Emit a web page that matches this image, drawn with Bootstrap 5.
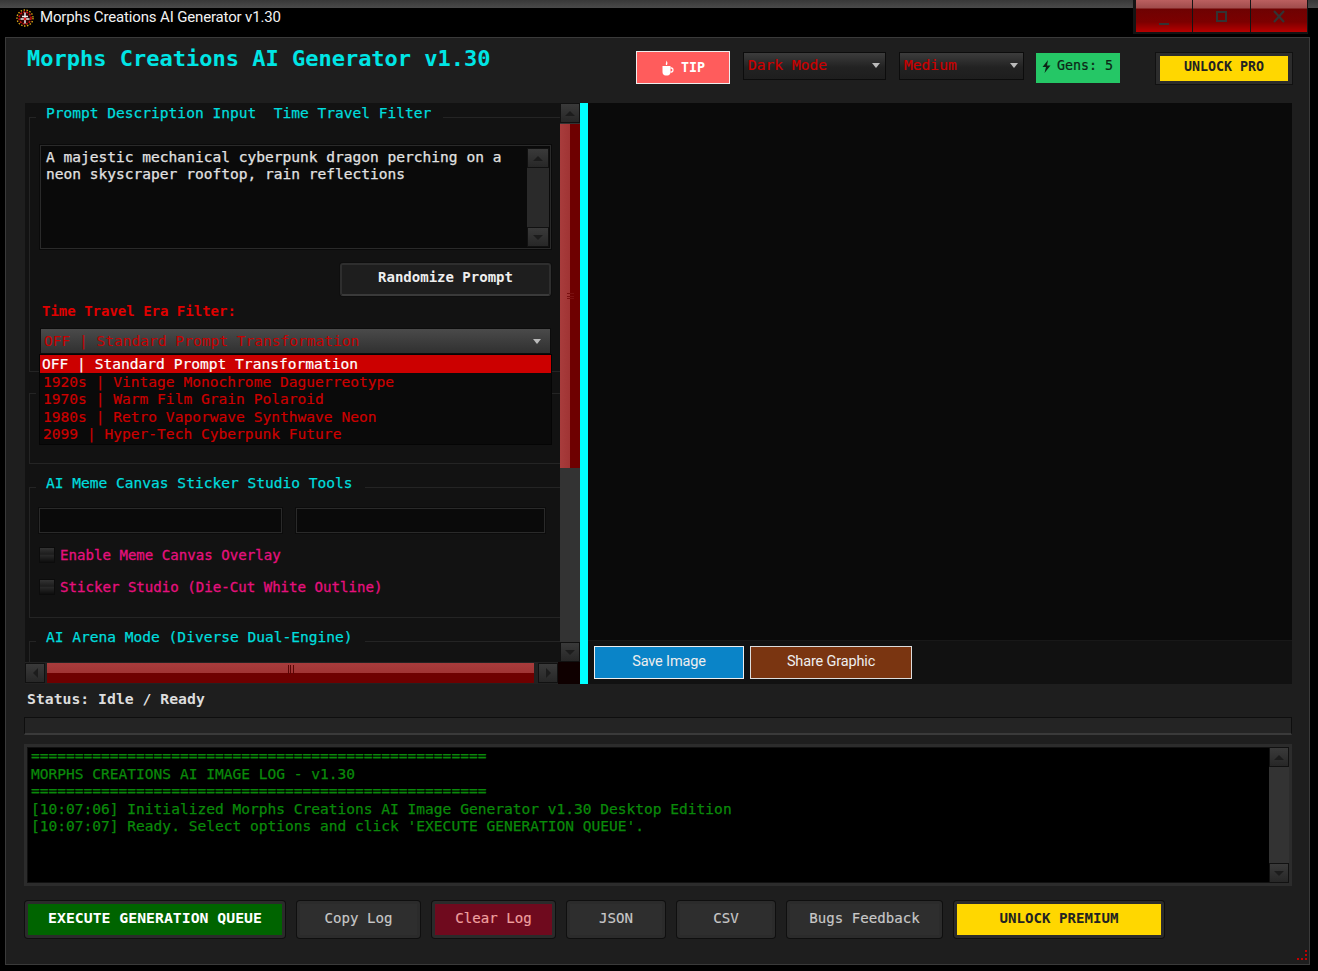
<!DOCTYPE html>
<html lang="en">
<head>
    <meta charset="UTF-8">
    <meta name="viewport" content="width=device-width, initial-scale=1.0">
    <title>Morphs Creations AI Generator v1.30</title>
    <link href="https://cdn.jsdelivr.net/npm/bootstrap@5.3.0/dist/css/bootstrap.min.css" rel="stylesheet">
    <style>
        html, body {
            height: 971px;
            overflow: hidden;
        }
        body {
            background-color: #000;
            font-family: "DejaVu Sans Mono", "Liberation Mono", monospace;
            font-size: 14.55px;
            color: #ddd;
        }

        /* title bar */
        .top-strip {
            height: 8px;
            background: linear-gradient(#383838, #4a4a4a);
        }
        .title-row {
            height: 29px;
            padding-left: 16px;
            gap: 6px;
            font-family: Roboto, "Liberation Sans", sans-serif;
            font-size: 15px;
            line-height: 18px;
            letter-spacing: -0.15px;
            color: #f2f2f2;
        }
        .title-row svg {
            margin-top: 1px;
        }
        .win-controls {
            position: absolute;
            top: 0;
            left: 1133px;
            width: 175px;
            height: 34px;
            padding: 0 1px 2px 3px;
            background: #141414;
            gap: 1px;
        }
        .win-btn {
            flex: 1 1 0;
            background: linear-gradient(#bb6060 0, #a04c4c 8px, #6e0202 9px, #7c0000 22px, #b80000 100%);
        }

        /* main window */
        .app-window {
            width: 1305px;
            height: 928px;
            margin-left: 5px;
            padding: 0 17px 0 18px;
            position: relative;
            background: #1e1e1e;
            border: 1px solid #3a3a3a;
        }
        .head-row {
            height: 65px;
        }
        .app-title {
            margin: 5px 0 0 3px;
            font-size: 22px;
            line-height: 32px;
            font-weight: 700;
            color: #00e5e5;
        }
        .tip-btn {
            width: 94px;
            height: 33px;
            margin-top: 13px;
            gap: 6px;
            background: #ff5c5c;
            border: 1px solid #eee;
            font-size: 13.3px;
            font-weight: 700;
            color: #fff;
        }
        .top-combo {
            height: 28px;
            margin: 14px 0 0 13px;
            padding: 0 5px 2px 4px;
            font-size: 14.6px;
            color: #cc0000;
            background: linear-gradient(#3c3c3c, #222 55%, #1e1e1e);
            border: 1px solid #0c0c0c;
            -webkit-text-stroke: 0.2px;
        }
        .combo-mode { width: 143px; }
        .combo-size { width: 125px; }
        .gens-badge {
            width: 84px;
            height: 30px;
            margin: 15px 0 0 12px;
            padding: 0 0 4px 6px;
            gap: 6px;
            background: #25c766;
            font-size: 13.3px;
            color: #0c2616;
            -webkit-text-stroke: 0.2px;
        }
        .pro-btn {
            width: 136px;
            height: 31px;
            margin: 15px 0 0 36px;
            padding: 0 0 4px !important;
            background: #ffd700;
            border: 3px solid #2c2c2c;
            border-left-width: 4px;
            border-right-width: 4px;
            box-shadow: 0 0 0 1px #111;
            font-size: 13.3px;
            font-weight: 600;
            color: #222;
        }
        .drop-arrow {
            width: 0;
            height: 0;
            border-left: 4px solid transparent;
            border-right: 4px solid transparent;
            border-top: 5px solid #bbb;
        }

        /* left panel */
        .main-row {
            height: 581px;
        }
        .left-pane {
            width: 555px;
            margin-left: 1px;
            background: #121212;
        }
        .pane-mid {
            height: 559px;
        }
        .pane-scroll {
            width: 535px;
            overflow: hidden;
        }
        .grp-box {
            margin: 9px -20px 0 4px;
            padding: 0 0 18px 10px;
            border: 1px solid #242424;
        }
        .grp-box legend {
            float: none;
            width: auto;
            margin: 0 0 0 -4px;
            padding: 0 12px 8px 10px;
            font-size: 14.55px;
            line-height: 20px;
            color: #00dcdc;
            white-space: pre;
            -webkit-text-stroke: 0.25px;
        }
        .grp-inner {
            width: 511px;
        }
        .grp-first { margin-top: 0; padding-top: 14px; padding-bottom: 17px; }
        .grp-hidden { margin-top: 7px; padding-top: 5px; }
        .grp-meme { padding-top: 7px; padding-bottom: 20px; }
        .prompt-box {
            height: 104px;
            background: #0a0a0a;
            border: 1px solid #2a2a2a;
            outline: 1px solid #0a0a0a;
            line-height: 17px;
            color: #e2e2e2;
            -webkit-text-stroke: 0.25px;
        }
        .prompt-text {
            width: 481px;
            padding: 2px 0 0 5px;
        }
        .prompt-bar {
            width: 22px;
            background: #2a2a2a;
            margin: 2px 1px 1px auto;
        }
        .rand-btn {
            width: 211px;
            height: 33px;
            margin-top: 14px;
            padding: 0 0 5px;
            background: #1e1e1e;
            border: 2px solid #2e2e2e;
            border-bottom-color: #3a3a3a;
            border-radius: 3px;
            box-shadow: 0 0 0 1px #0e0e0e;
            font-size: 14px;
            font-weight: 600;
            color: #eee;
        }
        .era-label {
            margin: 5px 0 0 2px;
            font-size: 14px;
            line-height: 20px;
            font-weight: 600;
            color: #e00000;
        }
        .era-wrap {
            margin-top: 7px;
        }
        .era-combo {
            height: 26px;
            padding: 0 9px 0 3px;
            background: linear-gradient(#4a4a4a, #303030);
            border: 1px solid #0c0c0c;
            color: #c80000;
        }
        .era-menu {
            top: 100%;
            left: -1px;
            width: 513px;
            margin: 0;
            padding: 0 0 1px;
            background: #0a0a0a;
            border: 1px solid #050505;
            border-radius: 0;
            font-size: 14.58px;
            line-height: 17.5px;
            -webkit-text-stroke: 0.2px;
        }
        .era-menu .dropdown-item {
            padding: 0 3px;
            color: #cc0000;
        }
        .era-menu .dropdown-item.active {
            background: #cc0000;
            color: #fff;
            padding-left: 2px;
        }
        .ghost-btn {
            height: 33px;
            background: #1e1e1e;
            border: 2px solid #2e2e2e;
            border-radius: 3px;
        }
        .ghost-a { width: 100px; margin-left: 293px; }
        .ghost-b { width: 104px; margin-left: 7px; }
        .meme-input {
            height: 25px;
            background: #0a0a0a;
            border: 1px solid #2a2a2a;
            border-radius: 0;
            outline: 1px solid #0c0c0c;
        }
        .meme-a { width: 243px; margin-left: -1px; }
        .meme-b { width: 249px; margin-left: 14px; }
        .meme-check {
            min-height: 16px;
            margin-top: 14px;
            padding: 0;
            gap: 5px;
            font-size: 14.1px;
            line-height: 16px;
            color: #e6107e;
            -webkit-text-stroke: 0.3px;
        }
        .meme-check + .meme-check { margin-top: 16px; }
        .meme-check .form-check-input {
            float: none;
            width: 16px;
            height: 16px;
            margin: 0 0 0 -1px;
            background: linear-gradient(#333, #1c1c1c 45%, #2a2a2a 50%, #0e0e0e);
            border: 1px solid #0c0c0c;
            border-radius: 0;
        }

        /* scrollbars */
        .vbar {
            width: 20px;
            background: #333;
        }
        .sb-btn {
            flex: 0 0 20px;
            background: linear-gradient(#3a3a3a, #272727);
            border: 1px solid #111;
        }
        .tri-up, .tri-down, .tri-left, .tri-right {
            width: 0;
            height: 0;
            border: 5px solid transparent;
        }
        .tri-up { border-bottom-color: #1c1c1c; margin-bottom: 5px; }
        .tri-down { border-top-color: #1c1c1c; margin-top: 5px; }
        .tri-left { border-right-color: #1c1c1c; margin-right: 5px; }
        .tri-right { border-left-color: #1c1c1c; margin-left: 5px; }
        .vthumb {
            height: 344px;
            margin-top: 1px;
            background: linear-gradient(90deg, #a83c3c, #a03434 50%, #6e0000 52%, #6e0000);
        }
        .grip-lines {
            width: 7px;
            height: 6px;
            border-top: 1px solid #7a1010;
            border-bottom: 1px solid #7a1010;
            background: linear-gradient(#7a1010, #7a1010) center / 100% 1px no-repeat;
        }
        .grip-lines-v {
            width: 6px;
            height: 9px;
            border-left: 1px solid #5a0505;
            border-right: 1px solid #5a0505;
            background: linear-gradient(#5a0505, #5a0505) center / 1px 100% no-repeat;
        }
        .hbar {
            height: 22px;
            background: #0f0000;
        }
        .hbar-track {
            width: 533px;
            padding: 1px 0;
            gap: 2px;
            background: #222;
        }
        .hbar .sb-btn {
            width: 19px;
        }
        .hthumb {
            flex: 1 1 0;
            margin-right: 2px;
            padding-top: 2px;
            background: linear-gradient(#a83c3c, #a03434 50%, #6e0000 52%, #6e0000);
        }
        .split-bar {
            width: 8px;
            background: #00ffff;
        }

        /* right panel */
        .canvas-area {
            background: #0a0a0a;
        }
        .action-bar {
            height: 44px;
            padding: 5px 0 0 6px;
            gap: 6px;
            background: #111;
            border-top: 1px solid #181818;
        }
        .img-btn {
            height: 33px;
            padding: 0 0 1px;
            border-radius: 0;
            font-family: Roboto, "Liberation Sans", sans-serif;
            font-size: 14.5px;
            letter-spacing: -0.15px;
            color: #eee;
        }
        .save-btn { width: 150px; background: #0a84c8; border: 1px solid #eee; }
        .share-btn { width: 162px; background: #7a3511; border: 1px solid #ddd; }

        /* status and log */
        .status-line {
            height: 33px;
            margin-left: 3px;
            font-size: 14.78px;
            line-height: 30px;
            font-weight: 600;
        }
        .job-progress {
            height: 18px;
            margin-bottom: 9px;
            background: #242424;
            border: 1px solid #0e0e0e;
            border-bottom: 2px solid #3a3a3a;
            border-radius: 0;
        }
        .log-box {
            height: 142px;
            background: #000;
            border: 3px solid #2c2c2c;
            box-shadow: inset 0 0 0 1px #111;
            line-height: 17.5px;
            color: #0a8a0a;
            -webkit-text-stroke: 0.25px;
        }
        .log-text {
            padding: 0.4px 0 0 4px;
            white-space: pre;
        }
        .log-bar {
            width: 20px;
            margin-right: 0;
        }

        /* bottom buttons */
        .btn-row {
            margin: 15px 0 0 1px;
            gap: 12px;
        }
        .app-btn {
            height: 37px;
            padding: 0 0 2px;
            border: 3px solid #2b2b2b;
            border-radius: 3px;
            box-shadow: 0 0 0 1px #0f0f0f;
            font-size: 14.1px;
            background: #2e2e2e;
            color: #c8c8c8;
            -webkit-text-stroke: 0.15px;
        }
        .exec-btn { width: 260px; background: #006400; color: #fff; font-weight: 600; font-size: 14.8px; -webkit-text-stroke: 0; }
        .log-btn { width: 123px; }
        .clear-btn { background: #6f0a1e; color: #f0a0a0; }
        .data-btn { width: 98px; }
        .bugs-btn { width: 155px; }
        .premium-btn { width: 210px; background: #ffd700; color: #222; font-weight: 600; font-size: 14.1px; -webkit-text-stroke: 0; }
        .grip {
            position: absolute;
            right: 1px;
            bottom: 4px;
        }
    </style>
</head>
<body>

    <!-- barra de titulo -->
    <div class="top-strip"></div>
    <div class="title-row d-flex align-items-start">
        <svg width="18" height="18" viewBox="0 0 18 18">
            <circle cx="9" cy="9" r="8" fill="none" stroke="#d9a514" stroke-width="1.4" stroke-dasharray="1.5 1.5"/>
            <circle cx="9" cy="9" r="6" fill="#2a0505" stroke="#c81010" stroke-width="1.6" stroke-dasharray="2 1.2"/>
            <path d="M9 3.5V14.5M4.5 10H13.5M6 7.5H12" stroke="#eee" stroke-width="1.5"/>
            <circle cx="9" cy="10" r="1.4" fill="#e01818"/>
        </svg>
        <span>Morphs Creations AI Generator v1.30</span>
    </div>
    <div class="win-controls d-flex">
        <div class="win-btn d-flex align-items-center justify-content-center">
            <svg width="10" height="24" viewBox="0 0 10 24"><rect x="0" y="19" width="10" height="2" fill="#333"/></svg>
        </div>
        <div class="win-btn d-flex align-items-center justify-content-center">
            <svg width="11" height="24" viewBox="0 0 11 24"><rect x="1" y="8" width="9" height="9" fill="none" stroke="#333" stroke-width="2"/></svg>
        </div>
        <div class="win-btn d-flex align-items-center justify-content-center">
            <svg width="12" height="24" viewBox="0 0 12 24"><path d="M1 7L11 18M11 7L1 18" stroke="#333" stroke-width="2.2"/></svg>
        </div>
    </div>

    <div class="app-window">
        <!-- cabecera -->
        <div class="head-row d-flex align-items-start">
            <div class="app-title flex-grow-1">Morphs Creations AI Generator v1.30</div>
            <button class="tip-btn btn rounded-0 p-0 d-flex align-items-center justify-content-center">
                <svg width="14" height="16" viewBox="0 0 14 16">
                    <path d="M1.500 6H9.500V12C9.500 14 8.200 15.500 6.500 15.500H4.500C2.800 15.500 1.500 14 1.500 12Z" fill="#fff"/>
                    <path d="M9.500 8H10.500C12.500 8 12.500 12 10.500 12H9.500" fill="none" stroke="#fff" stroke-width="1.3"/>
                    <path d="M5 5C4 3.500 6 2.500 5 0.500C7 2 6.500 3.500 6 5Z" fill="#fff"/>
                </svg>
                <span>TIP</span>
            </button>
            <div class="top-combo combo-mode d-flex align-items-center justify-content-between">
                <span>Dark Mode</span><span class="drop-arrow"></span>
            </div>
            <div class="top-combo combo-size d-flex align-items-center justify-content-between">
                <span>Medium</span><span class="drop-arrow"></span>
            </div>
            <div class="gens-badge d-flex align-items-center">
                <svg width="9" height="13" viewBox="0 0 9 13"><path d="M6 0L0.500 7H4L2.500 13L8.500 5.500H5Z" fill="#0c2616"/></svg>
                <span>Gens: 5</span>
            </div>
            <button class="pro-btn btn rounded-0">UNLOCK PRO</button>
        </div>

        <div class="main-row d-flex">
            <!-- panel izquierdo -->
            <div class="left-pane d-flex flex-column">
                <div class="pane-mid d-flex">
                    <div class="pane-scroll">
                        <fieldset class="grp-box grp-first">
                            <legend>Prompt Description Input  Time Travel Filter</legend>
                            <div class="grp-inner">
                                <div class="prompt-box d-flex">
                                    <div class="prompt-text">A majestic mechanical cyberpunk dragon perching on a neon skyscraper rooftop, rain reflections</div>
                                    <div class="prompt-bar d-flex flex-column justify-content-between">
                                        <div class="sb-btn d-flex align-items-center justify-content-center"><span class="tri-up"></span></div>
                                        <div class="sb-btn d-flex align-items-center justify-content-center"><span class="tri-down"></span></div>
                                    </div>
                                </div>
                                <div class="d-flex justify-content-end">
                                    <button class="rand-btn btn">Randomize Prompt</button>
                                </div>
                                <div class="era-label">Time Travel Era Filter:</div>
                                <div class="era-wrap position-relative">
                                    <div class="era-combo d-flex align-items-center justify-content-between">
                                        <span>OFF | Standard Prompt Transformation</span><span class="drop-arrow"></span>
                                    </div>
                                    <!-- lista desplegada -->
                                    <ul class="era-menu dropdown-menu show">
                                        <li><a class="dropdown-item active" href="#">OFF | Standard Prompt Transformation</a></li>
                                        <li><a class="dropdown-item" href="#">1920s | Vintage Monochrome Daguerreotype</a></li>
                                        <li><a class="dropdown-item" href="#">1970s | Warm Film Grain Polaroid</a></li>
                                        <li><a class="dropdown-item" href="#">1980s | Retro Vaporwave Synthwave Neon</a></li>
                                        <li><a class="dropdown-item" href="#">2099 | Hyper-Tech Cyberpunk Future</a></li>
                                    </ul>
                                </div>
                            </div>
                        </fieldset>

                        <!-- grupo tapado por la lista -->
                        <fieldset class="grp-box grp-hidden">
                            <legend>&nbsp;</legend>
                            <div class="d-flex">
                                <div class="ghost-btn ghost-a"></div>
                                <div class="ghost-btn ghost-b"></div>
                            </div>
                        </fieldset>

                        <fieldset class="grp-box grp-meme">
                            <legend>AI Meme Canvas Sticker Studio Tools</legend>
                            <div class="d-flex">
                                <div class="meme-input meme-a"></div>
                                <div class="meme-input meme-b"></div>
                            </div>
                            <div class="meme-check form-check d-flex align-items-center">
                                <input class="form-check-input" type="checkbox" id="memeOverlay">
                                <label for="memeOverlay">Enable Meme Canvas Overlay</label>
                            </div>
                            <div class="meme-check form-check d-flex align-items-center">
                                <input class="form-check-input" type="checkbox" id="stickerStudio">
                                <label for="stickerStudio">Sticker Studio (Die-Cut White Outline)</label>
                            </div>
                        </fieldset>

                        <fieldset class="grp-box">
                            <legend>AI Arena Mode (Diverse Dual-Engine)</legend>
                        </fieldset>
                    </div>
                    <div class="vbar d-flex flex-column">
                        <div class="sb-btn d-flex align-items-center justify-content-center"><span class="tri-up"></span></div>
                        <div class="vthumb d-flex align-items-center justify-content-center"><span class="grip-lines"></span></div>
                        <div class="sb-btn d-flex align-items-center justify-content-center mt-auto"><span class="tri-down"></span></div>
                    </div>
                </div>
                <div class="hbar d-flex">
                    <div class="hbar-track d-flex">
                        <div class="sb-btn d-flex align-items-center justify-content-center"><span class="tri-left"></span></div>
                        <div class="hthumb d-flex justify-content-center"><span class="grip-lines-v"></span></div>
                        <div class="sb-btn d-flex align-items-center justify-content-center"><span class="tri-right"></span></div>
                    </div>
                </div>
            </div>

            <div class="split-bar"></div>

            <!-- panel derecho -->
            <div class="flex-grow-1 d-flex flex-column">
                <div class="canvas-area flex-grow-1"></div>
                <div class="action-bar d-flex align-items-start">
                    <button class="img-btn save-btn btn">Save Image</button>
                    <button class="img-btn share-btn btn">Share Graphic</button>
                </div>
            </div>
        </div>

        <div class="status-line">Status: Idle / Ready</div>
        <div class="job-progress progress"></div>

        <div class="log-box d-flex justify-content-between">
            <div class="log-text">====================================================
MORPHS CREATIONS AI IMAGE LOG - v1.30
====================================================
[10:07:06] Initialized Morphs Creations AI Image Generator v1.30 Desktop Edition
[10:07:07] Ready. Select options and click 'EXECUTE GENERATION QUEUE'.</div>
            <div class="vbar log-bar d-flex flex-column justify-content-between">
                <div class="sb-btn d-flex align-items-center justify-content-center"><span class="tri-up"></span></div>
                <div class="sb-btn d-flex align-items-center justify-content-center"><span class="tri-down"></span></div>
            </div>
        </div>

        <div class="btn-row d-flex">
            <button class="app-btn exec-btn btn">EXECUTE GENERATION QUEUE</button>
            <button class="app-btn log-btn btn">Copy Log</button>
            <button class="app-btn log-btn clear-btn btn">Clear Log</button>
            <button class="app-btn data-btn btn">JSON</button>
            <button class="app-btn data-btn btn">CSV</button>
            <button class="app-btn bugs-btn btn">Bugs Feedback</button>
            <button class="app-btn premium-btn btn">UNLOCK PREMIUM</button>
        </div>

        <svg class="grip" width="12" height="10" viewBox="0 0 12 10" fill="#c00000">
            <rect x="9" y="0" width="2" height="2"/>
            <rect x="9" y="4" width="2" height="2"/>
            <rect x="1" y="8" width="2" height="2"/>
            <rect x="5" y="8" width="2" height="2"/>
            <rect x="9" y="8" width="2" height="2"/>
        </svg>
    </div>

    <script src="https://cdn.jsdelivr.net/npm/bootstrap@5.3.0/dist/js/bootstrap.bundle.min.js"></script>
</body>
</html>
